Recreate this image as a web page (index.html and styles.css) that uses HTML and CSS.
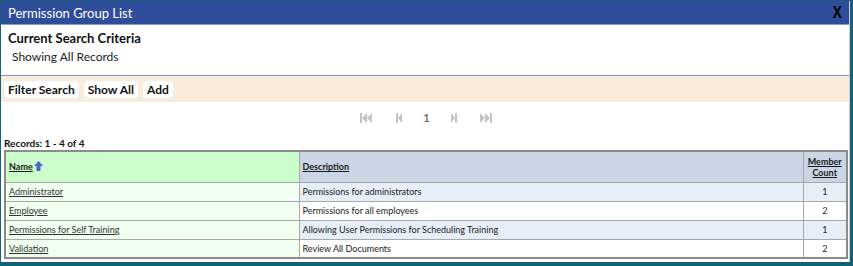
FILE: index.html
```html
<!DOCTYPE html>
<html lang="en">

<head>
    <meta charset="UTF-8">
    <title>Permission Group List</title>
    <link rel="stylesheet" href="styles.css">
</head>

<body>
    <div class="window">
        <div class="titlebar">
            <span class="title">Permission Group List</span>
            <span class="close">X</span>
        </div>
        <div class="criteria">
            <div class="criteria-title">Current Search Criteria</div>
            <div class="criteria-text">Showing All Records</div>
        </div>
        <div class="toolbar">
            <button class="btn">Filter Search</button>
            <button class="btn">Show All</button>
            <button class="btn">Add</button>
        </div>
        <div class="pager">
            <svg class="pg" width="12" height="10" viewBox="0 0 12 10"><rect x="0" y="0" width="2" height="10"/><path d="M7 0 L2 5 L7 10 Z"/><path d="M12 0 L7 5 L12 10 Z"/></svg>
            <svg class="pg" width="6" height="10" viewBox="0 0 6 10"><rect x="0" y="0" width="2" height="10"/><path d="M6 0 L2 5 L6 10 Z"/></svg>
            <span class="page">1</span>
            <svg class="pg" width="6" height="10" viewBox="0 0 6 10"><rect x="4" y="0" width="2" height="10"/><path d="M0 0 L4 5 L0 10 Z"/></svg>
            <svg class="pg" width="12" height="10" viewBox="0 0 12 10"><rect x="10" y="0" width="2" height="10"/><path d="M0 0 L5 5 L0 10 Z"/><path d="M5 0 L10 5 L5 10 Z"/></svg>
        </div>
        <div class="records">Records: 1 - 4 of 4</div>
        <table class="grid">
            <colgroup>
                <col class="c-name">
                <col>
                <col class="c-count">
            </colgroup>
            <thead>
                <tr>
                    <th class="col-name"><a>Name</a><svg class="sort" width="9" height="10" viewBox="0 0 9 10"><path d="M4.5 0 L9 5 L6.5 5 L6.5 10 L2.5 10 L2.5 5 L0 5 Z"/></svg></th>
                    <th class="col-desc"><a>Description</a></th>
                    <th class="col-count"><a>Member<br>Count</a></th>
                </tr>
            </thead>
            <tbody>
                <tr class="alt">
                    <td class="col-name"><a>Administrator</a></td>
                    <td>Permissions for administrators</td>
                    <td class="col-count">1</td>
                </tr>
                <tr>
                    <td class="col-name"><a>Employee</a></td>
                    <td>Permissions for all employees</td>
                    <td class="col-count">2</td>
                </tr>
                <tr class="alt">
                    <td class="col-name"><a>Permissions for Self Training</a></td>
                    <td>Allowing User Permissions for Scheduling Training</td>
                    <td class="col-count">1</td>
                </tr>
                <tr>
                    <td class="col-name"><a>Validation</a></td>
                    <td>Review All Documents</td>
                    <td class="col-count">2</td>
                </tr>
            </tbody>
        </table>
    </div>
</body>

</html>
```

FILE: styles.css
```css
* {
    margin: 0;
    padding: 0;
    box-sizing: border-box;
}

body {
    background: #17607a;
    font-family: Lato, "Open Sans", sans-serif;
    color: #111;
    padding: 1px 3px 4px 1px;
}

.window {
    background: #fff;
    height: 261px;
    border-right: 1px solid #c9d0d6;
}

.titlebar {
    height: 24px;
    background: #2f4d9b;
    border-bottom: 1px solid #8a9cc8;
    display: flex;
    align-items: center;
    justify-content: space-between;
    padding: 0 6px 0 7px;
}

.title {
    color: #fff;
    font-size: 13px;
}

.close {
    color: #000;
    font-family: "Liberation Sans", sans-serif;
    font-weight: bold;
    font-size: 16px;
    transform: scaleX(0.85);
}

.criteria {
    height: 51px;
    padding: 4px 7px 0;
    border-bottom: 1px solid #8591b2;
}

.criteria-title {
    font-weight: bold;
    font-size: 13px;
    line-height: 18px;
}

.criteria-text {
    font-size: 12px;
    line-height: 16px;
    margin-top: 2px;
    padding-left: 4px;
    color: #222;
}

.toolbar {
    background: #f8ecdc;
    height: 26px;
    display: flex;
    align-items: center;
    gap: 5px;
    padding: 0 3px;
}

.btn {
    background: #fff;
    border: none;
    border-radius: 4px;
    font-family: Lato, "Open Sans", sans-serif;
    font-weight: bold;
    font-size: 12px;
    height: 17px;
    padding: 0 4px;
    color: #111;
}

.pager {
    display: flex;
    justify-content: center;
    align-items: center;
    height: 31px;
    padding-left: 2px;
}

.pg {
    fill: #c4c4c4;
}

.pager .pg:nth-child(1) {
    margin-right: 24px;
}

.pager .pg:nth-child(2) {
    margin-right: 21px;
}

.page {
    font-size: 12px;
    color: #6b4a1e;
    margin-right: 21px;
}

.pager .pg:nth-child(4) {
    margin-right: 23px;
}

.records {
    font-size: 10px;
    font-weight: bold;
    padding: 4px 3px 0;
    line-height: 13px;
}

.grid {
    margin: 0 0 0 3px;
    width: 844px;
    table-layout: fixed;
    border-collapse: collapse;
    border: 2px solid #8c8c8c;
    font-size: 9px;
}

.c-name {
    width: 294px;
}

.c-count {
    width: 44px;
}

.grid th,
.grid td {
    border: 1px solid #a8a8a8;
    text-align: left;
    padding: 0 3px;
    height: 19px;
    color: #222;
    white-space: nowrap;
}

.grid th {
    height: 31px;
    background: #cad6e6;
    font-weight: bold;
}

.grid a {
    text-decoration: underline;
    color: #1a1a1a;
}

.grid td a {
    color: #333;
}

.grid th.col-name {
    background: #ccfdcc;
}

.grid td.col-name {
    background: #f0fff0;
}

.grid .col-count {
    text-align: center;
}

.grid th.col-count {
    line-height: 11px;
}

.grid tr.alt td {
    background: #e6eef8;
}

.grid tr.alt td.col-name {
    background: #f0fff0;
}

.sort {
    fill: #4a63c4;
    margin-left: 1px;
    vertical-align: -1px;
}
```
